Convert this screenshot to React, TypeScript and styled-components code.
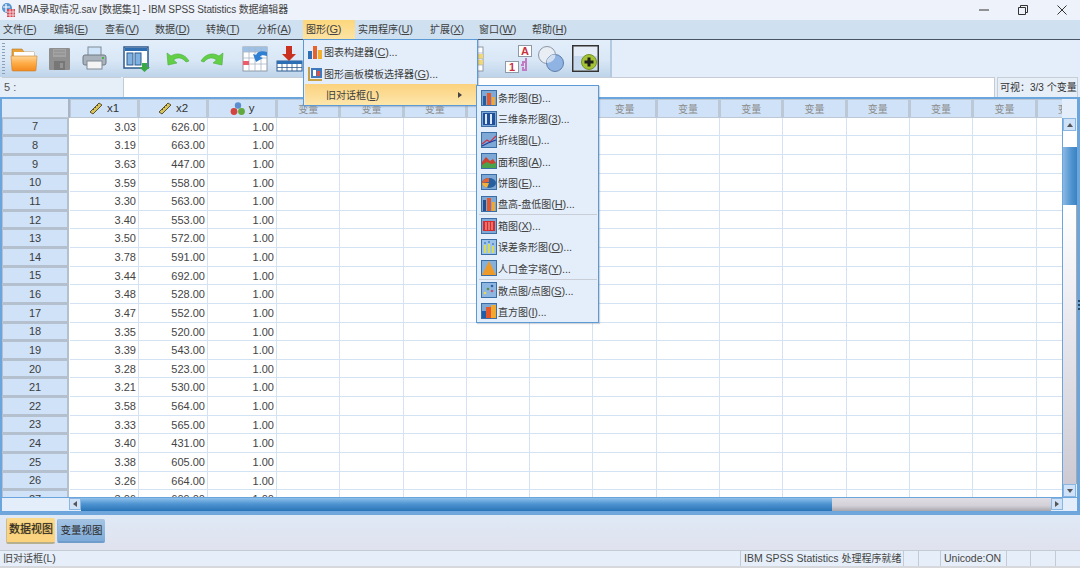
import React from 'react';
import styled, {createGlobalStyle} from 'styled-components';

const Global = createGlobalStyle`
  html, body { margin: 0; padding: 0; background: #e3eefa; }
  body { font-family: "Liberation Sans", "Noto Sans CJK SC", sans-serif; font-size: 10px; color: #333; overflow: hidden; }
  u { text-underline-offset: 1px; }
`;

const Page = styled.div`
  position: relative;
  width: 1080px;
  height: 568px;
  display: flex;
  flex-direction: column;
  overflow: hidden;
`;

const TitleBar = styled.div`
  height: 20px;
  background: #eef2fb;
  display: flex;
  align-items: center;
  padding-left: 1px;
  gap: 2px;
  line-height: 20px;
  color: #444;
`;
const TitleText = styled.span`
  flex: 1;
  white-space: nowrap;
  letter-spacing: -.12px;
`;
const WinButton = styled.div`
  width: 37px;
  display: flex;
  justify-content: center;
  color: #333;
`;

const MenuBar = styled.div`
  height: 19px;
  background: #cfe0f1;
  border-bottom: 1px solid #4a5563;
  display: flex;
  line-height: 19px;
`;
const MenuTitle = styled.div<{$width: number; $active?: boolean}>`
  width: ${p => p.$width}px;
  flex: none;
  box-sizing: border-box;
  padding-left: 3px;
  white-space: nowrap;
  color: #3c3c3c;
  background: ${p => p.$active ? 'linear-gradient(#fcd67c, #fde4a4)' : 'none'};
`;
const Key = styled.span`
  font-size: 11px;
  letter-spacing: -.2px;
  color: #444;
`;

const Toolbar = styled.div`
  height: 37px;
  width: 612px;
  display: flex;
  align-items: center;
  background: linear-gradient(#e3eefa 0, #d9e7f6 55%, #bed4ea 100%);
  border-right: 2px solid #b3c9e0;
  box-sizing: border-box;
  padding-left: 2px;
`;
const Grip = styled.div`
  width: 3px;
  height: 32px;
  background: repeating-linear-gradient(#8aa0b8 0 1px, transparent 1px 3px);
`;
const ToolSlot = styled.div<{$left: number; $width: number}>`
  margin-left: ${p => p.$left}px;
  width: ${p => p.$width}px;
  height: 30px;
  flex: none;
  display: flex;
  align-items: center;
  justify-content: center;
`;

const FormulaBar = styled.div`
  height: 20px;
  display: flex;
  gap: 2px;
  padding: 0 2px;
  line-height: 19px;
  background: #e3eefa;
`;
const CellName = styled.div`
  width: 117px;
  background: #e6eef8;
  border-top: 1px solid #c8ced6;
  padding-left: 2px;
  font-size: 11px;
  color: #555;
`;
const CellValue = styled.div`
  flex: 1;
  background: #fff;
  border: 1px solid #c5ccd6;
  border-bottom: none;
`;
const VisibleInfo = styled.div`
  width: 81px;
  box-sizing: border-box;
  white-space: nowrap;
  background: #e6eef8;
  border: 1px solid #c8ced6;
  border-bottom: none;
  padding-left: 2px;
  color: #333;
`;

const DataPanel = styled.div`
  position: relative;
  height: 415px;
  border: 1px solid #6aa5dd;
  border-width: 2px 3px 1px 2px;
  display: flex;
  flex-direction: column;
  box-sizing: border-box;
  background: #e3eefa;
`;
const SideGrip = styled.div`
  position: absolute;
  right: -3px;
  top: 201px;
  width: 2px;
  height: 12px;
  background: repeating-linear-gradient(#24496e 0 2px, transparent 2px 4px);
`;
const GridArea = styled.div`
  flex: 1;
  min-height: 0;
  display: flex;
`;
const SheetClip = styled.div`
  flex: 1;
  overflow: hidden;
  background: #fff;
`;
const Sheet = styled.div`
  display: grid;
  grid-template-columns: 68px 69px 69px 69px repeat(13, 63.3px) 40px;
  grid-auto-rows: 18.64px;
  width: 1200px;
`;
const Corner = styled.div`
  background: #dce9f8;
  border-right: 2px solid #a9b5c2;
  border-bottom: 1px solid #bcc8d6;
  box-sizing: border-box;
`;
const ColHead = styled.div<{$muted?: boolean}>`
  background: #cfe2f7;
  border: 1px solid #bcc8d6;
  border-width: 1px 2px 1px 1px;
  box-sizing: border-box;
  display: flex;
  align-items: center;
  justify-content: center;
  gap: 3px;
  font-size: ${p => p.$muted ? '10px' : '11.5px'};
  color: ${p => p.$muted ? '#8c8c8c' : '#333'};
  white-space: nowrap;
  overflow: hidden;
`;
const RowHead = styled.div`
  background: #cfe2f7;
  border: 1px solid #b4c0ce;
  border-width: 1px 2px 2px 1px;
  box-sizing: border-box;
  margin-right: 1px;
  display: flex;
  align-items: center;
  justify-content: center;
  font-size: 11px;
  color: #3c3c3c;
`;
const Cell = styled.div`
  background: #fff;
  border-right: 1px solid #d3e3f4;
  border-bottom: 1px solid #d3e3f4;
  box-sizing: border-box;
  text-align: right;
  padding-right: 2px;
  font-size: 11px;
  line-height: 18px;
  color: #444;
`;

const VScroll = styled.div`
  width: 14px;
  flex: none;
  display: flex;
  flex-direction: column;
  background: #e3eefa;
  border-left: 1px solid #6aa5dd;
  margin-top: 19px;
`;
const ScrollButton = styled.div<{$h?: boolean}>`
  flex: none;
  width: ${p => p.$h ? '12px' : '13px'};
  height: ${p => p.$h ? '12px' : '13px'};
  background: #cfe2f7;
  border: 1px solid #8bb6e0;
  box-sizing: border-box;
  display: flex;
  align-items: center;
  justify-content: center;
`;
const Tri = styled.span<{$dir: 'up' | 'down' | 'left' | 'right'}>`
  width: 0;
  height: 0;
  border: 3px solid transparent;
  ${p => p.$dir === 'up' && 'border-bottom: 4px solid #555; border-top-width: 0;'}
  ${p => p.$dir === 'down' && 'border-top: 4px solid #555; border-bottom-width: 0;'}
  ${p => p.$dir === 'left' && 'border-right: 4px solid #555; border-left-width: 0;'}
  ${p => p.$dir === 'right' && 'border-left: 4px solid #555; border-right-width: 0;'}
`;
const VThumbTop = styled.div`
  height: 16px;
  background: #fff;
`;
const VFill = styled.div`
  height: 58px;
  background: linear-gradient(90deg, #8db9e2, #4f94d0 60%, #3c82c2);
`;
const VTrack = styled.div`
  flex: 1;
  background: linear-gradient(#fff, #ebeaf0 40%, #cdcad3);
  border-right: 1px solid #a9a7ae;
`;

const HScrollRow = styled.div`
  height: 13px;
  flex: none;
  display: flex;
  border-top: 1px solid #6aa5dd;
  background: #e3eefa;
`;
const HScrollStart = styled.div`
  width: 67px;
  flex: none;
`;
const HFill = styled.div`
  width: 751px;
  flex: none;
  background: linear-gradient(#8ec0ea, #4f94d2 45%, #2a74b6);
`;
const HTrack = styled.div`
  flex: 1;
  background: linear-gradient(#e0dde4, #d2cfd6 60%, #a9a7ae);
`;
const HCorner = styled.div`
  width: 14px;
  flex: none;
`;

const Splitter = styled.div`
  height: 3px;
  background: #6fa6dc;
  flex: none;
`;
const TabsBar = styled.div`
  height: 35px;
  flex: none;
  display: flex;
  gap: 2px;
  align-items: flex-start;
  padding: 3px 0 0 6px;
  background: linear-gradient(#dfe9f6, #e0e2ee);
  box-sizing: border-box;
`;
const TabButton = styled.div<{$active?: boolean}>`
  width: ${p => p.$active ? '49px' : '48px'};
  height: ${p => p.$active ? '26px' : '24px'};
  border-radius: 2px;
  text-align: center;
  font-size: ${p => p.$active ? '11px' : '10.5px'};
  line-height: 23px;
  white-space: nowrap;
  margin-top: ${p => p.$active ? '0' : '1px'};
  color: #2b2b2b;
  text-shadow: ${p => p.$active ? '0 0 1px #8a6a1f' : 'none'};
  background: ${p => p.$active ? 'linear-gradient(#fbd98b, #fcd27c)' : 'linear-gradient(#a5c4e4, #7eabd8)'};
  border-bottom: 2px solid ${p => p.$active ? '#b7b08f' : '#6f9ccb'};
  border-left: 1px solid ${p => p.$active ? '#c8bd94' : '#8db3da'};
  box-sizing: border-box;
`;

const StatusBar = styled.div`
  height: 18px;
  flex: none;
  display: flex;
  background: #e6eff9;
  border-top: 1px solid #c5cbd3;
  border-bottom: 2px solid #d6d8dc;
  box-sizing: border-box;
  line-height: 15px;
  color: #444;
`;
const StatusCell = styled.div<{$width: number}>`
  width: ${p => p.$width}px;
  flex: none;
  padding-left: 3px;
  box-sizing: border-box;
  border-right: 1px solid #c5cbd3;
  white-space: nowrap;
  overflow: hidden;
  font-size: 10.5px;
`;
const StatusCjk = styled.span`
  font-size: 10px;
`;

const MenuPanel = styled.div<{$x: number; $y: number; $w: number; $top?: number}>`
  position: absolute;
  left: ${p => p.$x}px;
  top: ${p => p.$y}px;
  width: ${p => p.$w}px;
  padding-top: ${p => p.$top || 0}px;
  box-sizing: border-box;
  background: #e3eefa;
  border: 1px solid #5c9ad6;
  box-shadow: 1px 1px 1px rgba(70, 90, 120, .25);
  color: #3c3c3c;
  display: flex;
  flex-direction: column;
`;
const MenuItem = styled.div<{$h: number; $pad?: number; $active?: boolean}>`
  height: ${p => p.$h}px;
  display: flex;
  align-items: center;
  gap: 1px;
  padding-left: ${p => p.$pad || 3}px;
  white-space: nowrap;
  background: ${p => p.$active ? 'linear-gradient(#fbd27d, #fde6ac)' : 'none'};
  margin-left: ${p => p.$active ? '1px' : '0'};
`;
const SubLabel = styled.span`
  margin-left: 18px;
  flex: 1;
`;
const Arrow = styled.span`
  width: 0;
  height: 0;
  margin-right: 15px;
  border-left: 4px solid #444;
  border-top: 3.5px solid transparent;
  border-bottom: 3.5px solid transparent;
`;
const MenuRule = styled.div`
  height: 1px;
  margin: 0 1px 0 2px;
  background: #c9ced6;
`;
const ChipIcon = styled.svg`
  width: 16px;
  height: 16px;
  flex: none;
`;

function MiniBars() {
  return <ChipIcon viewBox="0 0 16 16">
    <rect x="1" y="7" width="4" height="8" fill="#2f6fb5"/>
    <rect x="6" y="2" width="4" height="13" fill="#e8632b"/>
    <rect x="11" y="6" width="4" height="9" fill="#f1b12f"/>
  </ChipIcon>;
}

function Board() {
  return <ChipIcon viewBox="0 0 16 16">
    <path d="M1 1h2v12h12v2H1z" fill="#c6a042"/>
    <rect x="4" y="2" width="11" height="10" fill="#3f78bb"/>
    <rect x="6" y="4" width="3" height="6" fill="#fff"/>
    <rect x="10" y="5" width="3" height="5" fill="#e64c3c"/>
  </ChipIcon>;
}

function SubIcon({kind}: {kind: string}) {
  const frame = <rect x=".5" y=".5" width="15" height="15" fill="#7ea9d6" stroke="#3b6ea6"/>;
  const shapes: {[K: string]: React.ReactNode} = {
    bar: <><rect x="2" y="6" width="3" height="9" fill="#245c9e"/><rect x="6" y="3" width="4" height="12" fill="#e4572b"/><rect x="11" y="7" width="3" height="8" fill="#f2a72e"/></>,
    bar3: <><rect x="2" y="2" width="12" height="12" fill="#1f4f98"/><rect x="4" y="3" width="2" height="10" fill="#d8e8f8"/><rect x="9" y="3" width="2" height="10" fill="#d8e8f8"/></>,
    line: <><path d="M1 12 6 8l3 2 6-6" fill="none" stroke="#c9344a" strokeWidth="1.3"/><path d="M1 14 7 11l8-3" fill="none" stroke="#1f3f9e" strokeWidth="1.3"/></>,
    area: <><path d="M1 15V9l4-5 4 4 3-2 3 4v5z" fill="#c9432f"/><path d="M1 15v-3l5-3 4 2 5-1v5z" fill="#4aa24a"/></>,
    pie: <><ellipse cx="8" cy="9" rx="7" ry="5" fill="#28609f"/><path d="M8 8 1 9a7 5 0 0 1 7-5z" fill="#e8602c"/><path d="M1 9a7 5 0 0 0 5 4.700L8 9z" fill="#f3b13a"/></>,
    hilo: <><rect x="2" y="4" width="3" height="11" fill="#234f8c"/><rect x="6" y="2" width="4" height="13" fill="#e4572b"/><rect x="11" y="6" width="3" height="9" fill="#efa92f"/></>,
    box: <><rect x="2" y="3" width="12" height="10" fill="#d92b2b"/><path d="M5 4v8M8 4v8M11 4v8" stroke="#f4b9b0" strokeWidth="1"/></>,
    err: <><rect x="1" y="1" width="14" height="14" fill="#9cc3ea"/><path d="M4 6v8M8 5v9M12 7v7" stroke="#e9e22f" strokeWidth="1.600"/><path d="M3 4h2M7 3h2M11 5h2" stroke="#2a5fa8"/></>,
    pyr: <><rect x="1" y="1" width="14" height="14" fill="#84b0dc"/><path d="M8 1 15 15H1z" fill="#ee9a28"/></>,
    scatter: <><rect x="1" y="1" width="14" height="14" fill="#8db7e0"/><circle cx="4" cy="11" r="1.300" fill="#e9d94b"/><circle cx="7" cy="7" r="1.300" fill="#5a8a45"/><circle cx="11" cy="9" r="1.300" fill="#c94f6f"/><circle cx="11" cy="4" r="1.300" fill="#2f5fa6"/></>,
    hist: <><rect x="1" y="8" width="4" height="7" fill="#1f5ea8"/><rect x="5" y="4" width="5" height="11" fill="#e4562a"/><rect x="10" y="2" width="5" height="13" fill="#efa92f"/></>
  };
  return <ChipIcon viewBox="0 0 16 16">{frame}{shapes[kind]}</ChipIcon>;
}

function RulerIcon() {
  return <svg width="15" height="15" viewBox="0 0 15 15">
    <path d="M1 11 10 2l3 2-9 9z" fill="#d8c25a" stroke="#5b5330"/>
    <path d="M4 8l1 1M6 6l1 1M8 4l1 1" stroke="#5b5330"/>
  </svg>;
}

function NominalIcon() {
  return <svg width="16" height="15" viewBox="0 0 16 15">
    <circle cx="8" cy="4.500" r="3.200" fill="#5c8fd2"/>
    <circle cx="4" cy="10.500" r="3.400" fill="#d2453f"/>
    <circle cx="11.500" cy="10.500" r="3.400" fill="#62a83c"/>
  </svg>;
}

function FolderTool() {
  return <svg width="28" height="26" viewBox="0 0 28 26">
    <defs>
      <linearGradient id="folderFront" x1="0" y1="0" x2="0" y2="1">
        <stop offset="0" stopColor="#ffd596"/>
        <stop offset=".5" stopColor="#ffab45"/>
        <stop offset="1" stopColor="#f28a1e"/>
      </linearGradient>
    </defs>
    <path d="M2 3h10l2 3h10v8H2z" fill="#e9a23a" stroke="#b97a26" strokeWidth=".6"/>
    <rect x="4" y="6" width="20" height="6" fill="#fff"/>
    <path d="M1 10h26l-1 14a1 1 0 0 1-1 1H3a1 1 0 0 1-1-1z" fill="url(#folderFront)" stroke="#c9812e" strokeWidth=".6"/>
  </svg>;
}
function SaveTool() {
  return <svg width="23" height="24" viewBox="0 0 23 24">
    <rect x="1" y="1" width="21" height="22" rx="1" fill="#8f8f8f"/>
    <rect x="5" y="2" width="13" height="8" fill="#a3a3a3"/>
    <path d="M6 4h11M6 7h11" stroke="#8a8a8a"/>
    <rect x="6" y="14" width="11" height="9" fill="#777"/>
    <rect x="12" y="16" width="3" height="5" fill="#949494"/>
  </svg>;
}
function PrintTool() {
  return <svg width="25" height="25" viewBox="0 0 25 25">
    <rect x="6" y="1" width="13" height="9" fill="#cfe4f8" stroke="#7e8a96"/>
    <rect x="1" y="9" width="23" height="10" rx="2" fill="#a9b2ba" stroke="#6f7a85"/>
    <rect x="5" y="15" width="15" height="8" fill="#f4f4f4" stroke="#7e8a96"/>
    <rect x="20" y="11" width="2" height="2" fill="#47b34b"/>
  </svg>;
}
function RecallTool() {
  return <svg width="28" height="26" viewBox="0 0 28 26">
    <rect x="1" y="1" width="24" height="21" fill="#fff" stroke="#2d5a8e" strokeWidth="1.500"/>
    <rect x="2" y="2" width="22" height="3" fill="#2d6db0"/>
    <rect x="4" y="7" width="6" height="12" fill="#7fb2e3" stroke="#2d5a8e"/>
    <rect x="12" y="7" width="6" height="12" fill="#7fb2e3" stroke="#2d5a8e"/>
    <path d="M19 17h5v4h3l-5.500 5-5.500-5h3z" fill="#3aa845"/>
  </svg>;
}
function TurnTool({flip}: {flip?: boolean}) {
  return <svg width="24" height="14" viewBox="0 0 24 14" style={flip ? {transform: 'scaleX(-1)'} : undefined}>
    <path d="M1 1 2 13l9-2-3.500-3C11 5 16 5 20 10l3-1C19 2 11 0 5 4z" fill="#62cf47" stroke="#48ad3c" strokeWidth=".6"/>
  </svg>;
}
function GotoTool() {
  return <svg width="26" height="26" viewBox="0 0 26 26">
    <rect x="1" y="1" width="24" height="24" fill="#fff" stroke="#8f9aa6"/>
    <rect x="1" y="1" width="24" height="5" fill="#9dc0e6"/>
    <path d="M7 1v24M13 1v24M19 1v24M1 6h24M1 12h24M1 18h24" stroke="#a8b6c4" strokeWidth=".8"/>
    <rect x="1" y="15" width="6" height="4" fill="#ef5b6a"/>
    <path d="M25 6C19 4 15 6 14 9l-3-1 3 8 7-4-3-1c1-2 3-2 7-1z" fill="#2f7fd2"/>
  </svg>;
}
function InsertTool() {
  return <svg width="27" height="27" viewBox="0 0 27 27">
    <path d="M10 1h6v8h4l-7 7-7-7h4z" fill="#c9301f"/>
    <rect x="1" y="16" width="25" height="10" fill="#fff" stroke="#2c5a8f"/>
    <rect x="1" y="16" width="25" height="3" fill="#2c6eb3"/>
    <path d="M6 19v7M11 19v7M16 19v7M21 19v7M1 22.500h25" stroke="#2c5a8f" strokeWidth=".8"/>
  </svg>;
}
function SheetTool() {
  return <svg width="21" height="26" viewBox="0 0 21 26">
    <rect x="1" y="1" width="19" height="24" fill="#fff" stroke="#8f9aa6"/>
    <rect x="8" y="8" width="12" height="5" fill="#f2d774"/>
    <rect x="8" y="14" width="12" height="5" fill="#f2d774"/>
    <path d="M8 1v24M14 1v24M1 7h19M1 13h19M1 19h19" stroke="#a8b6c4" strokeWidth=".8"/>
  </svg>;
}
function LabelsTool() {
  return <svg width="27" height="28" viewBox="0 0 27 28">
    <rect x="13.500" y=".5" width="13" height="11" fill="#fff" stroke="#8f9aa6"/>
    <text x="20" y="10" textAnchor="middle" fontSize="11" fontWeight="700" fontFamily="Liberation Sans" fill="#c8323f">A</text>
    <rect x=".5" y="16.500" width="13" height="11" fill="#fff" stroke="#8f9aa6"/>
    <text x="7" y="26" textAnchor="middle" fontSize="11" fontWeight="700" fontFamily="Liberation Sans" fill="#c8323f">1</text>
    <path d="M21 13v13M21 17h-3v3h-2M21 25h-3v-3" fill="none" stroke="#c27ac2" strokeWidth="2"/>
  </svg>;
}
function VennTool() {
  return <svg width="28" height="28" viewBox="0 0 28 28">
    <circle cx="10" cy="10" r="8.500" fill="#e9eef5" stroke="#8a97a6"/>
    <circle cx="18" cy="18" r="8.500" fill="#8fb4e4" stroke="#5d7ca8"/>
    <path d="M18 9.500a8.500 8.500 0 0 0-8.500 8.500 8.500 8.500 0 0 0 9-9z" fill="#d2dff0"/>
  </svg>;
}
function AddTool() {
  return <svg width="27" height="27" viewBox="0 0 27 27">
    <rect x=".75" y=".75" width="25.500" height="25.500" fill="#e4edf7" stroke="#333" strokeWidth="1.500"/>
    <rect x="2" y="11" width="23" height="14" fill="#c6d9ee"/>
    <circle cx="17" cy="17" r="7.500" fill="#a4c234" stroke="#79922a"/>
    <path d="M17 12.500v9M12.500 17h9" stroke="#1e1e1e" strokeWidth="3"/>
  </svg>;
}
function SpssMark() {
  return <svg width="15" height="16" viewBox="0 0 15 16">
    <circle cx="6" cy="6" r="5" fill="#5a95d2"/>
    <path d="M5 2v8M2 5h7" stroke="#fff" strokeWidth="1.200"/>
    <rect x="6" y="7" width="8" height="8" fill="#d64a55"/>
    <path d="M6 10h8M6 13h8M9 7v8M12 7v8" stroke="#fff" strokeWidth=".7"/>
  </svg>;
}

const menus: [string, string, number][] = [
  ['文件', 'F', 51], ['编辑', 'E', 51], ['查看', 'V', 50], ['数据', 'D', 51], ['转换', 'T', 51], ['分析', 'A', 49],
  ['图形', 'G', 52], ['实用程序', 'U', 72], ['扩展', 'X', 49], ['窗口', 'W', 53], ['帮助', 'H', 60]
];

const rows: [number, string, string][] = [
  [7, '3.03', '626.00'], [8, '3.19', '663.00'], [9, '3.63', '447.00'], [10, '3.59', '558.00'],
  [11, '3.30', '563.00'], [12, '3.40', '553.00'], [13, '3.50', '572.00'], [14, '3.78', '591.00'],
  [15, '3.44', '692.00'], [16, '3.48', '528.00'], [17, '3.47', '552.00'], [18, '3.35', '520.00'],
  [19, '3.39', '543.00'], [20, '3.28', '523.00'], [21, '3.21', '530.00'], [22, '3.58', '564.00'],
  [23, '3.33', '565.00'], [24, '3.40', '431.00'], [25, '3.38', '605.00'], [26, '3.26', '664.00'],
  [27, '3.06', '609.00']
];

const emptyCols = Array.from({length: 14}, (_, i) => i);

const chartItems: ({label: string; key: string; kind: string} | 'rule')[] = [
  {label: '条形图', key: 'B', kind: 'bar'},
  {label: '三维条形图', key: '3', kind: 'bar3'},
  {label: '折线图', key: 'L', kind: 'line'},
  {label: '面积图', key: 'A', kind: 'area'},
  {label: '饼图', key: 'E', kind: 'pie'},
  {label: '盘高-盘低图', key: 'H', kind: 'hilo'},
  'rule',
  {label: '箱图', key: 'X', kind: 'box'},
  {label: '误差条形图', key: 'O', kind: 'err'},
  {label: '人口金字塔', key: 'Y', kind: 'pyr'},
  'rule',
  {label: '散点图/点图', key: 'S', kind: 'scatter'},
  {label: '直方图', key: 'I', kind: 'hist'}
];

export default function App() {
  return (
    <Page>
      <Global/>
      <TitleBar>
        <SpssMark/>
        <TitleText>MBA录取情况.sav [数据集1] - IBM SPSS Statistics 数据编辑器</TitleText>
        <WinButton>
          <svg width="10" height="10" viewBox="0 0 10 10"><path d="M0 5h10" stroke="#333"/></svg>
        </WinButton>
        <WinButton>
          <svg width="10" height="10" viewBox="0 0 10 10"><path d="M.5 2.500h7v7h-7zM2.500 2.500v-2h7v7h-2" fill="none" stroke="#333"/></svg>
        </WinButton>
        <WinButton>
          <svg width="10" height="10" viewBox="0 0 10 10"><path d="M.5.5l9 9M9.500.5l-9 9" stroke="#333"/></svg>
        </WinButton>
      </TitleBar>
      <MenuBar>
        {menus.map(([name, key, width]) =>
          <MenuTitle key={key} $width={width} $active={key === 'G'}>
            {name}<Key>(<u>{key}</u>)</Key>
          </MenuTitle>
        )}
      </MenuBar>
      <Toolbar>
        <Grip/>
        <ToolSlot $left={5} $width={28}><FolderTool/></ToolSlot>
        <ToolSlot $left={10} $width={23}><SaveTool/></ToolSlot>
        <ToolSlot $left={11} $width={25}><PrintTool/></ToolSlot>
        <ToolSlot $left={16} $width={28}><RecallTool/></ToolSlot>
        <ToolSlot $left={15} $width={24}><TurnTool/></ToolSlot>
        <ToolSlot $left={10} $width={24}><TurnTool flip/></ToolSlot>
        <ToolSlot $left={18} $width={26}><GotoTool/></ToolSlot>
        <ToolSlot $left={8} $width={27}><InsertTool/></ToolSlot>
        <ToolSlot $left={160} $width={21}><SheetTool/></ToolSlot>
        <ToolSlot $left={21} $width={27}><LabelsTool/></ToolSlot>
        <ToolSlot $left={5} $width={28}><VennTool/></ToolSlot>
        <ToolSlot $left={7} $width={27}><AddTool/></ToolSlot>
      </Toolbar>
      <FormulaBar>
        <CellName>5 :</CellName>
        <CellValue/>
        <VisibleInfo>可视：3/3 个变量</VisibleInfo>
      </FormulaBar>
      <DataPanel>
        <SideGrip/>
        <GridArea>
          <SheetClip>
            <Sheet>
              <Corner/>
              <ColHead><RulerIcon/>x1</ColHead>
              <ColHead><RulerIcon/>x2</ColHead>
              <ColHead><NominalIcon/>y</ColHead>
              {emptyCols.map(i => <ColHead key={i} $muted>变量</ColHead>)}
              {rows.map(([n, x1, x2]) =>
                <React.Fragment key={n}>
                  <RowHead>{n}</RowHead>
                  <Cell>{x1}</Cell>
                  <Cell>{x2}</Cell>
                  <Cell>1.00</Cell>
                  {emptyCols.map(i => <Cell key={i}/>)}
                </React.Fragment>
              )}
            </Sheet>
          </SheetClip>
          <VScroll>
            <ScrollButton><Tri $dir="up"/></ScrollButton>
            <VThumbTop/>
            <VFill/>
            <VTrack/>
            <ScrollButton><Tri $dir="down"/></ScrollButton>
          </VScroll>
        </GridArea>
        <HScrollRow>
          <HScrollStart/>
          <ScrollButton $h><Tri $dir="left"/></ScrollButton>
          <HFill/>
          <HTrack/>
          <ScrollButton $h><Tri $dir="right"/></ScrollButton>
          <HCorner/>
        </HScrollRow>
      </DataPanel>
      <Splitter/>
      <TabsBar>
        <TabButton $active>数据视图</TabButton>
        <TabButton>变量视图</TabButton>
      </TabsBar>
      <StatusBar>
        <StatusCell $width={741}><StatusCjk>旧对话框</StatusCjk>(L)</StatusCell>
        <StatusCell $width={163}>IBM SPSS Statistics <StatusCjk>处理程序就绪</StatusCjk></StatusCell>
        <StatusCell $width={15}/>
        <StatusCell $width={22}/>
        <StatusCell $width={66}>Unicode:ON</StatusCell>
        <StatusCell $width={24}/>
        <StatusCell $width={25}/>
      </StatusBar>

      <MenuPanel $x={303} $y={39} $w={175}>
        <MenuItem $h={23}><MiniBars/><span>图表构建器<Key>(<u>C</u>)...</Key></span></MenuItem>
        <MenuItem $h={21}><Board/><span>图形画板模板选择器<Key>(<u>G</u>)...</Key></span></MenuItem>
        <MenuItem $h={21} $active><SubLabel>旧对话框<Key>(<u>L</u>)</Key></SubLabel><Arrow/></MenuItem>
      </MenuPanel>
      <MenuPanel $x={476} $y={85} $w={123} $top={1}>
        {chartItems.map((item, i) => item === 'rule'
          ? <MenuRule key={i}/>
          : <MenuItem key={item.key} $h={21.2} $pad={4}><SubIcon kind={item.kind}/><span>{item.label}<Key>(<u>{item.key}</u>)...</Key></span></MenuItem>
        )}
      </MenuPanel>
    </Page>
  );
}
